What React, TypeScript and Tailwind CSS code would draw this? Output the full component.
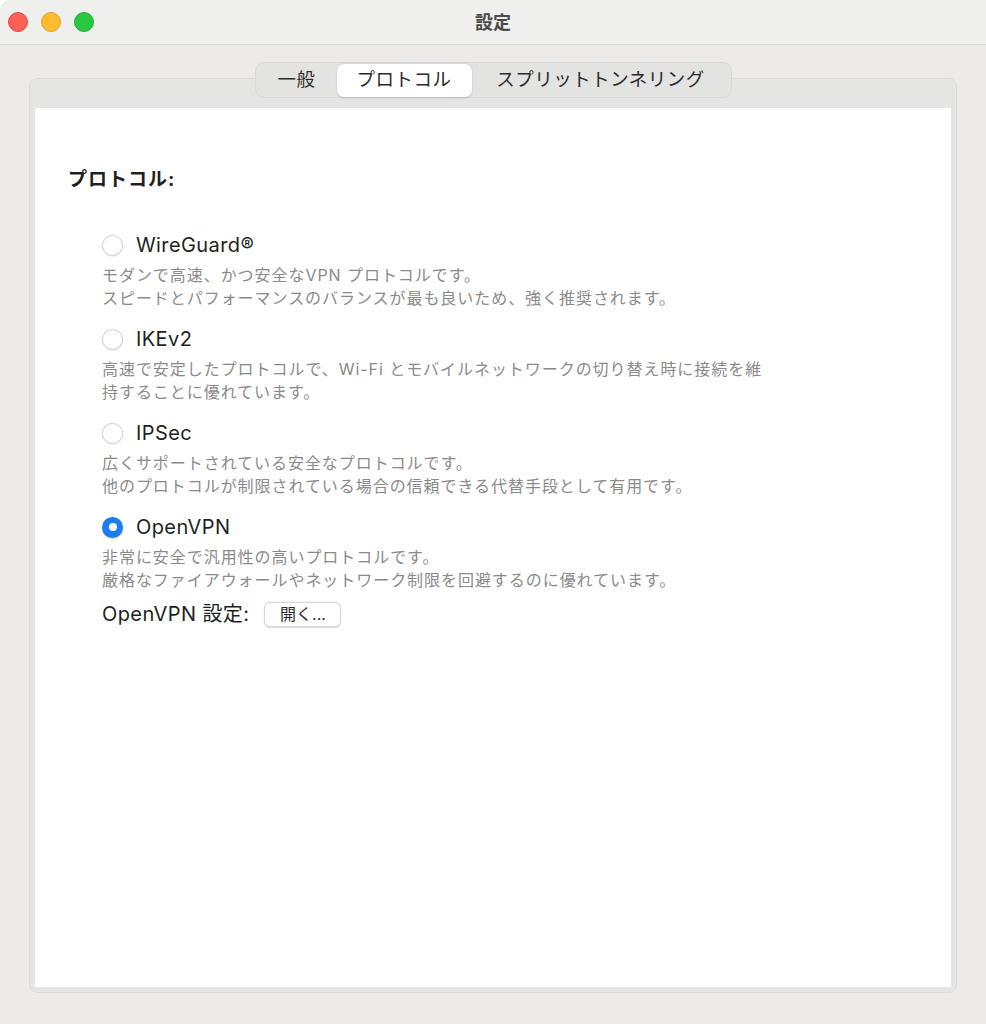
import { useState } from 'react';

type Protocol = {
  id: string;
  name: string;
  lines: string[];
};

const protocols: Protocol[] = [
  {
    id: 'wireguard',
    name: 'WireGuard®',
    lines: [
      'モダンで高速、かつ安全なVPN プロトコルです。',
      'スピードとパフォーマンスのバランスが最も良いため、強く推奨されます。',
    ],
  },
  {
    id: 'ikev2',
    name: 'IKEv2',
    lines: [
      '高速で安定したプロトコルで、Wi-Fi とモバイルネットワークの切り替え時に接続を維',
      '持することに優れています。',
    ],
  },
  {
    id: 'ipsec',
    name: 'IPSec',
    lines: [
      '広くサポートされている安全なプロトコルです。',
      '他のプロトコルが制限されている場合の信頼できる代替手段として有用です。',
    ],
  },
  {
    id: 'openvpn',
    name: 'OpenVPN',
    lines: [
      '非常に安全で汎用性の高いプロトコルです。',
      '厳格なファイアウォールやネットワーク制限を回避するのに優れています。',
    ],
  },
];

const tabs = [
  { id: 'general', label: '一般', width: 'w-[80px]' },
  { id: 'protocol', label: 'プロトコル', width: 'w-[135px]' },
  { id: 'split', label: 'スプリットトンネリング', width: 'w-[258px]' },
];

function Radio({ checked }: { checked: boolean }) {
  if (checked) {
    return (
      <span className="flex h-[21px] w-[21px] shrink-0 items-center justify-center rounded-full bg-[#1b7cf4] shadow-[0_0.5px_1px_rgba(0,0,0,0.25)]">
        <span className="h-[8px] w-[8px] rounded-full bg-white" />
      </span>
    );
  }
  return (
    <span className="h-[21px] w-[21px] shrink-0 rounded-full border border-[#cfcfcf] bg-white shadow-[0_0.5px_1.5px_rgba(0,0,0,0.12)]" />
  );
}

export default function App() {
  const [tab, setTab] = useState('protocol');
  const [selected, setSelected] = useState('openvpn');

  return (
    <div
      className="flex h-[1024px] w-[986px] flex-col overflow-hidden rounded-tl-[10px] bg-[#ecebea] text-[#222]"
      style={{ fontFamily: 'Inter, "Noto Sans CJK JP", sans-serif' }}
    >
      {/* title bar */}
      <div className="grid h-[45px] shrink-0 grid-cols-[1fr_auto_1fr] items-center border-b border-[#d8d8d7] bg-[#efefee]">
        <div className="flex items-center gap-[13px] pl-[8px]">
          <span className="h-[20px] w-[20px] rounded-full border border-[#e2463f] bg-[#fe5f57]" />
          <span className="h-[20px] w-[20px] rounded-full border border-[#e0a028] bg-[#febc2e]" />
          <span className="h-[20px] w-[20px] rounded-full border border-[#1fad35] bg-[#28c840]" />
        </div>
        <div className="text-[18px] font-bold text-[#4a4a4a]">設定</div>
        <div />
      </div>

      <div className="flex flex-col px-[29px] pt-[17px]">
        {/* segmented tabs */}
        <div className="relative z-10 -mb-[20px] flex justify-center">
          <div className="flex h-[36px] items-center rounded-[9px] border border-[#d9d9d8] bg-[#e3e3e2] p-[1px]">
            {tabs.map((t) => (
              <button
                key={t.id}
                onClick={() => setTab(t.id)}
                className={`flex h-[33px] items-center justify-center rounded-[7px] text-[18.5px] tracking-[0.5px] text-[#2b2b2b] ${t.width} ${
                  tab === t.id ? 'bg-white shadow-[0_0.5px_2px_rgba(0,0,0,0.18)]' : ''
                }`}
              >
                {t.label}
              </button>
            ))}
          </div>
        </div>

        {/* tab panel */}
        <div className="rounded-[8px] border border-[#dcdcdb] bg-[#e5e5e4] px-[5px] pb-[5px] pt-[29px]">
          <div className="h-[879px] bg-white pl-[33px] pt-[60px]">
            <h2 className="text-[19px] font-bold leading-[24px] tracking-[1px] text-[#1f1f1f]">プロトコル:</h2>

            <div className="ml-[34px] mt-[39px] flex flex-col gap-[15px]">
              {protocols.map((p) => (
                <div key={p.id}>
                  <label
                    className="flex h-[28px] cursor-default items-center gap-[13px]"
                    onClick={() => setSelected(p.id)}
                  >
                    <Radio checked={selected === p.id} />
                    <span className="text-[20px] tracking-[0.4px] text-[#1f1f1f]">{p.name}</span>
                  </label>
                  <div className="mt-[5px] text-[16px] leading-[23px] tracking-[0.95px] text-[#8a8a8a]">
                    {p.lines.map((l) => (
                      <div key={l}>{l}</div>
                    ))}
                  </div>
                </div>
              ))}
            </div>

            <div className="ml-[34px] mt-[8px] flex h-[28px] items-center gap-[15px]">
              <span className="text-[20px] tracking-[0.4px] text-[#1f1f1f]">OpenVPN 設定:</span>
              <button className="flex h-[25px] w-[77px] items-center justify-center rounded-[6px] border border-[#d6d6d6] bg-white text-[16px] text-[#2b2b2b] shadow-[0_0.5px_1.5px_rgba(0,0,0,0.15)]">
                開く...
              </button>
            </div>
          </div>
        </div>
      </div>
    </div>
  );
}
